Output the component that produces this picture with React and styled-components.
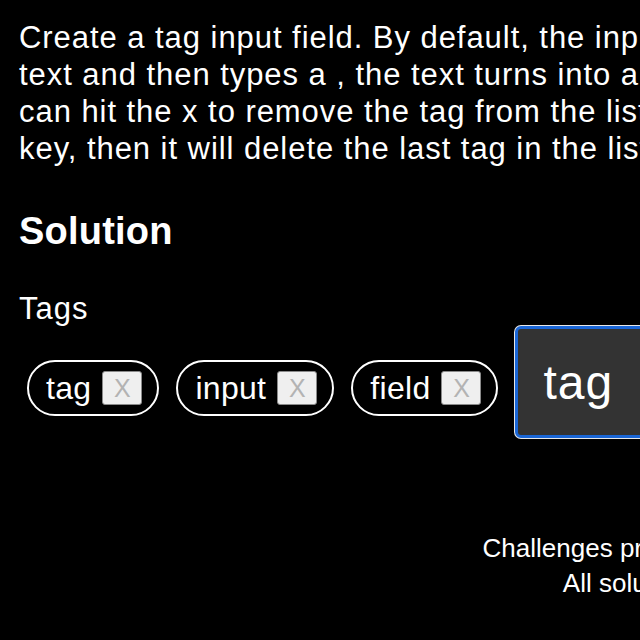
import React from "react";
import styled, { createGlobalStyle } from "styled-components";

const Global = createGlobalStyle`
  html, body {
    margin: 0;
    padding: 0;
    background: #000;
    overflow: hidden;
  }
  body {
    font-family: "Liberation Sans", Arial, Helvetica, sans-serif;
    color: #fff;
  }
`;

const Page = styled.div`
  width: 1406px;
  padding-top: 19px;
`;

const Main = styled.main`
  padding: 0 19px;
`;

const Description = styled.p`
  margin: 0;
  font-size: 31px;
  line-height: 37px;
  letter-spacing: 0.95px;
`;

const Heading = styled.h2`
  margin: 42px 0 0;
  font-size: 38px;
  line-height: 44px;
  font-weight: 700;
  letter-spacing: 0.2px;
`;

const Label = styled.label`
  display: block;
  margin-top: 38px;
  font-size: 31px;
  line-height: 35px;
  letter-spacing: 1px;
`;

const Row = styled.div`
  display: flex;
  align-items: baseline;
  gap: 17px;
  padding-left: 8px;
`;

const Chip = styled.span`
  display: inline-flex;
  align-items: center;
  gap: 11px;
  height: 56px;
  box-sizing: border-box;
  padding: 0 15px 0 17px;
  border: 2px solid #fff;
  border-radius: 28px;
  font-size: 32px;
  line-height: 37px;
  letter-spacing: 0.3px;
  color: #fff;
`;

const RemoveButton = styled.button`
  width: 40px;
  height: 34px;
  padding: 0;
  box-sizing: border-box;
  background: #efefef;
  border: 1px solid #8a8a8a;
  border-radius: 3px;
  font-family: "Liberation Sans", Arial, sans-serif;
  font-size: 25px;
  line-height: 32px;
  letter-spacing: 0;
  color: #b3b3b3;
  cursor: pointer;
`;

const TagInput = styled.input`
  width: 320px;
  height: 112px;
  box-sizing: border-box;
  padding: 0 25px;
  background: #333;
  border: 3px solid #1a66d6;
  border-radius: 6px;
  box-shadow: 0 0 0 1px #e8e8e8;
  outline: none;
  font-family: "Liberation Sans", Arial, sans-serif;
  font-size: 48px;
  line-height: 55px;
  letter-spacing: 1px;
  color: #fff;
`;

const Footer = styled.footer`
  margin-top: 93px;
  text-align: center;
  font-size: 26px;
  line-height: 35px;
`;

const FooterLine = styled.p`
  margin: 0;
`;

const tags = ["tag", "input", "field"];

export default function App() {
  return (
    <Page>
      <Global />
      <Main>
        <Description>
          Create a tag input field. By default, the input field is empty. When the user types
          <br />
          text and then types a , the text turns into a tag. The user
          <br />
          can hit the x to remove the tag from the list. If the user hits the backspace
          <br />
          key, then it will delete the last tag in the list.
        </Description>
        <Heading>Solution</Heading>
        <Label htmlFor="tags">Tags</Label>
        <Row>
          {tags.map((t) => (
            <Chip key={t}>
              {t}
              <RemoveButton type="button">X</RemoveButton>
            </Chip>
          ))}
          <TagInput id="tags" defaultValue="tag" />
        </Row>
      </Main>
      <Footer>
        <FooterLine>Challenges provided by Frontend Eval</FooterLine>
        <FooterLine>All solutions are my own</FooterLine>
      </Footer>
    </Page>
  );
}
